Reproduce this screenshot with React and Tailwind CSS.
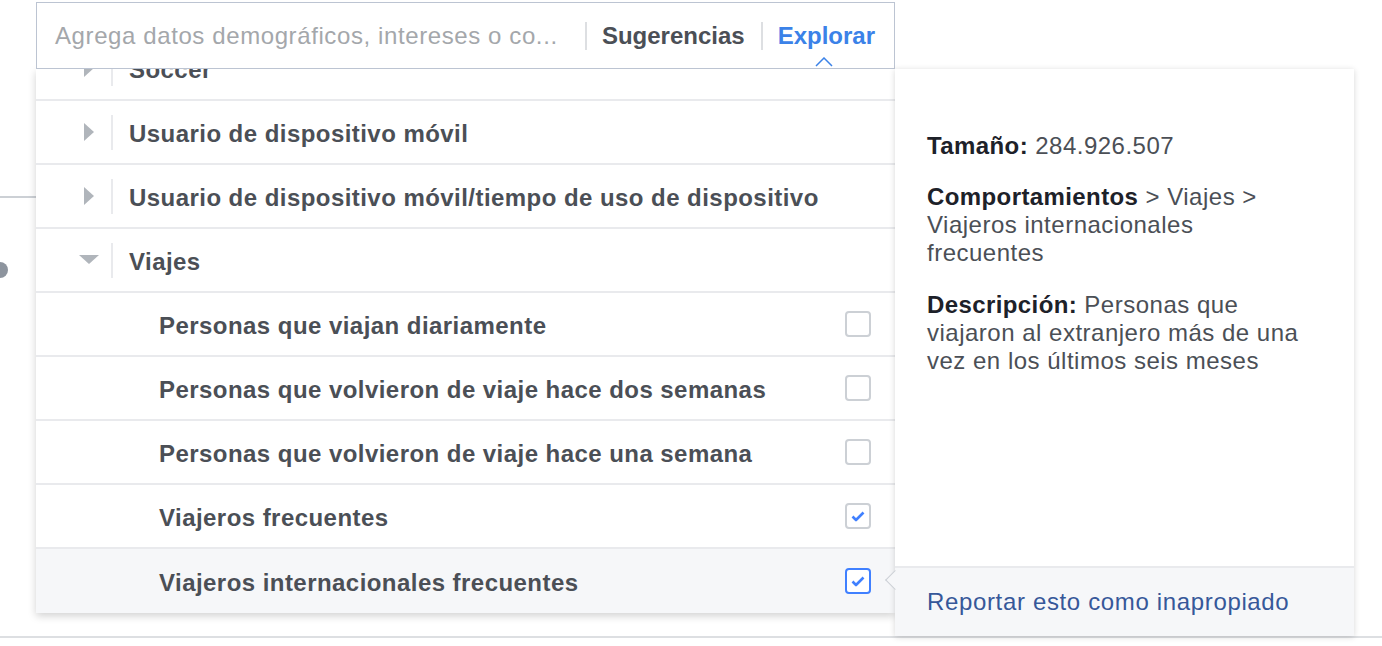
import React from "react";

const font = { fontFamily: '"Liberation Sans", Arial, sans-serif' };

const categories = [
  { label: "Soccer" },
  { label: "Usuario de dispositivo móvil" },
  { label: "Usuario de dispositivo móvil/tiempo de uso de dispositivo" },
  { label: "Viajes", open: true },
];

const options = [
  { label: "Personas que viajan diariamente" },
  { label: "Personas que volvieron de viaje hace dos semanas" },
  { label: "Personas que volvieron de viaje hace una semana" },
  { label: "Viajeros frecuentes", checked: true },
  { label: "Viajeros internacionales frecuentes", checked: true, active: true },
];

function Triangle({ open }) {
  if (open) {
    return (
      <svg width="20" height="10" viewBox="0 0 20 10">
        <path d="M0 0 L20 0 L10 9 Z" fill="#b0b5bb" />
      </svg>
    );
  }
  return (
    <svg width="10" height="18" viewBox="0 0 10 18">
      <path d="M0 0 L10 9 L0 18 Z" fill="#b0b5bb" />
    </svg>
  );
}

function CategoryRow({ label, open }) {
  return (
    <div className="h-[64px] flex items-center border-b-2 border-[#e9eaed]">
      <div className="w-[20px] ml-[43px] flex justify-center">
        <Triangle open={open} />
      </div>
      <div className="ml-[12px] w-[2px] h-[35px] bg-[#e9eaed]" />
      <span className="ml-[16px] pt-[3px] text-[24px] tracking-[0.45px] font-bold text-[#4b4f56]">{label}</span>
    </div>
  );
}

function Checkbox({ checked, active }) {
  return (
    <div
      className={
        "w-[26px] h-[26px] rounded-[4px] border-2 flex items-center justify-center bg-white " +
        (active ? "border-[#4080ff]" : "border-[#ccd0d5]")
      }
    >
      {checked && (
        <svg width="14" height="11" viewBox="0 0 14 11">
          <path d="M1.5 5.5 L5 9 L12.5 1.5" fill="none" stroke="#4080ff" strokeWidth="2.6" strokeLinejoin="round" />
        </svg>
      )}
    </div>
  );
}

function OptionRow({ label, checked, active, last }) {
  return (
    <div
      className={
        "h-[64px] flex items-center pl-[123px] pr-[24px] " +
        (last ? "bg-[#f6f7f9]" : "border-b-2 border-[#e9eaed]")
      }
    >
      <span className="flex-1 pt-[3px] text-[24px] tracking-[0.45px] font-bold text-[#4b4f56]">{label}</span>
      <Checkbox checked={checked} active={active} />
    </div>
  );
}

export default function App() {
  return (
    <div className="relative w-[1382px] h-[646px] bg-white overflow-hidden" style={font}>
      {/* page behind the menu */}
      <div className="pt-[196px]">
        <div className="w-[40px] h-[2px] bg-[#ccd0d5]" />
        <div className="mt-[64px] -ml-[8px] w-[16px] h-[16px] rounded-full bg-[#8d949e]" />
        <div className="mt-[358px] h-[2px] bg-[#dddfe2]" />
      </div>

      {/* search + dropdown */}
      <div className="absolute left-[36px] top-[2px] w-[859px]">
        <div className="relative h-[67px] border-[1.5px] border-[#bcc4d2] bg-white flex items-center pl-[18px] pr-[19px]">
          <span className="flex-1 text-[24px] tracking-[0.6px] text-[#a4a7ab] whitespace-nowrap">
            Agrega datos demográficos, intereses o co...
          </span>
          <div className="w-[2px] h-[28px] bg-[#dddfe2]" />
          <span className="ml-[15px] text-[24px] font-bold text-[#4b4f56]">Sugerencias</span>
          <div className="ml-[16px] w-[2px] h-[28px] bg-[#dddfe2]" />
          <span className="ml-[15px] text-[24px] font-bold text-[#3b82e8]">Explorar</span>
          <svg className="absolute left-[778px] top-[54px]" width="18" height="10" viewBox="0 0 18 10">
            <path d="M1 9 L9 1 L17 9" fill="none" stroke="#3b82e8" strokeWidth="1.5" />
          </svg>
        </div>

        <div className="h-[544px] overflow-hidden bg-white shadow-[0_3px_8px_rgba(0,0,0,0.18)]">
          <div className="-mt-[32px]">
            {categories.map((c) => (
              <CategoryRow key={c.label} label={c.label} open={c.open} />
            ))}
            {options.map((o, i) => (
              <OptionRow key={o.label} {...o} last={i === options.length - 1} />
            ))}
          </div>
        </div>
      </div>

      {/* detail popover */}
      <div className="absolute left-[895px] top-[69px] w-[459px] h-[567px] flex flex-col bg-white shadow-[0_1px_6px_rgba(0,0,0,0.16)]">
        <div className="flex-1 pt-[63px] pl-[32px] pr-[40px] text-[24px] leading-[28px] tracking-[0.5px] text-[#4b4f56]">
          <p>
            <b className="text-[#1d2129] tracking-[0.4px]">Tamaño:</b> 284.926.507
          </p>
          <p className="mt-[23px]">
            <b className="text-[#1d2129] tracking-[0.4px]">Comportamientos</b> &gt; Viajes &gt; Viajeros internacionales frecuentes
          </p>
          <p className="mt-[24px]">
            <b className="text-[#1d2129] tracking-[0.4px]">Descripción:</b> Personas que viajaron al extranjero más de una vez en los últimos seis meses
          </p>
        </div>
        <div className="h-[70px] border-t-2 border-[#e9eaed] bg-[#f6f7f9] pl-[32px] pt-[16px] text-[24px] tracking-[0.65px] text-[#365899]">
          Reportar esto como inapropiado
        </div>
        <div className="absolute -left-[7px] top-[504px] w-[14px] h-[14px] rotate-45 bg-[#f6f7f9] border-l border-b border-[#ccd0d5]" />
      </div>
    </div>
  );
}
